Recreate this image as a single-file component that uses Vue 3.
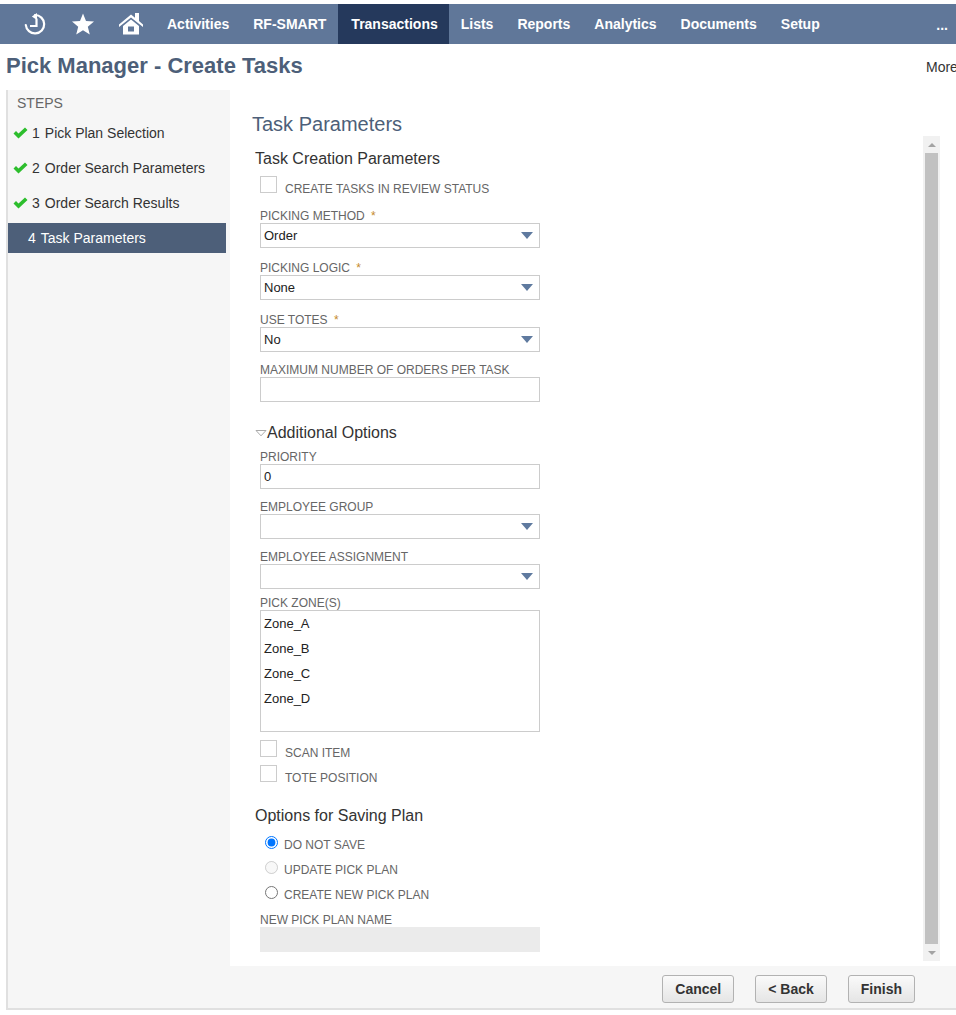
<script setup>
const menu = ['Activities', 'RF-SMART', 'Transactions', 'Lists', 'Reports', 'Analytics', 'Documents', 'Setup']
const steps = [
  { num: 1, label: 'Pick Plan Selection', done: true },
  { num: 2, label: 'Order Search Parameters', done: true },
  { num: 3, label: 'Order Search Results', done: true },
  { num: 4, label: 'Task Parameters', done: false }
]
const zones = ['Zone_A', 'Zone_B', 'Zone_C', 'Zone_D']
</script>

<template>
  <div class="page">
    <nav class="nav">
      <span class="nav-icon">
        <svg width="24" height="24" viewBox="0 0 24 24" fill="none" stroke="#fff" stroke-width="2.2">
          <path d="M12 3A9.200 9.200 0 1 1 2.800 13" stroke-linecap="round" />
          <path d="M8.800 4.500L14 1v7z" fill="#fff" stroke="none" />
          <path d="M13.500 6.500V14H7" />
        </svg>
      </span>
      <span class="nav-icon">
        <svg width="24" height="24" viewBox="0 0 24 24" fill="#fff">
          <path d="M12 1.500l3 7.600 8 .5-6.200 5.100 2 7.900L12 18.200 5.200 22.600l2-7.900L1 9.600l8-.5z" />
        </svg>
      </span>
      <span class="nav-icon">
        <svg width="26" height="24" viewBox="0 0 26 24" fill="#fff">
          <path d="M1 12.500L13 2.500l4 3.300V1h4v8.100l4 3.400V15L13 5.500 1 15z" />
          <path fill-rule="evenodd" d="M13 7.500l8 6.500v8.500H5V14zM10 14.500v5h6v-5z" />
        </svg>
      </span>
      <a
        v-for="item in menu"
        :key="item"
        class="nav-link"
        :class="{ active: item === 'Transactions' }"
      >{{ item }}</a>
      <span class="nav-more">...</span>
    </nav>

    <header class="title-row">
      <h1>Pick Manager - Create Tasks</h1>
      <span class="more">More</span>
    </header>

    <div class="main">
      <aside class="steps">
        <div class="steps-title">STEPS</div>
        <div
          v-for="s in steps"
          :key="s.num"
          class="step"
          :class="{ current: !s.done }"
        >
          <svg v-if="s.done" class="check" width="15" height="12" viewBox="0 0 15 12">
            <path d="M.5 6.500L3 4l2.500 2.500L12 .5 14.500 3l-9 8.500z" fill="#2dbe2d" />
          </svg>
          <span class="num">{{ s.num }}</span>
          <span>{{ s.label }}</span>
        </div>
      </aside>

      <div class="right">
        <div class="content">
          <form class="form" @submit.prevent>
            <h2>Task Parameters</h2>

            <h3>Task Creation Parameters</h3>
            <div class="check-row first">
              <span class="box"></span>
              <span class="lbl">CREATE TASKS IN REVIEW STATUS</span>
            </div>

            <div class="field tight">
              <label class="req">PICKING METHOD <i>*</i></label>
              <div class="ctl">Order<b class="arrow"></b></div>
            </div>
            <div class="field">
              <label class="req">PICKING LOGIC <i>*</i></label>
              <div class="ctl">None<b class="arrow"></b></div>
            </div>
            <div class="field">
              <label class="req">USE TOTES <i>*</i></label>
              <div class="ctl">No<b class="arrow"></b></div>
            </div>
            <div class="field">
              <label>MAXIMUM NUMBER OF ORDERS PER TASK</label>
              <div class="ctl"></div>
            </div>

            <h3 class="additional">
              <svg width="12" height="8" viewBox="0 0 12 8">
                <path d="M1 1.500h10L6 6.800z" fill="#fff" stroke="#aaa" />
              </svg>Additional Options
            </h3>
            <div class="field tight2">
              <label>PRIORITY</label>
              <div class="ctl">0</div>
            </div>
            <div class="field">
              <label>EMPLOYEE GROUP</label>
              <div class="ctl"><b class="arrow"></b></div>
            </div>
            <div class="field">
              <label>EMPLOYEE ASSIGNMENT</label>
              <div class="ctl"><b class="arrow"></b></div>
            </div>
            <div class="field zones-field">
              <label>PICK ZONE(S)</label>
              <div class="zones">
                <div v-for="z in zones" :key="z" class="zone">{{ z }}</div>
              </div>
            </div>
            <div class="check-row scan">
              <span class="box"></span>
              <span class="lbl">SCAN ITEM</span>
            </div>
            <div class="check-row tote">
              <span class="box"></span>
              <span class="lbl">TOTE POSITION</span>
            </div>

            <h3 class="saving">Options for Saving Plan</h3>
            <label class="radio-row">
              <input type="radio" name="save" checked />
              <span>DO NOT SAVE</span>
            </label>
            <label class="radio-row">
              <input type="radio" name="save" disabled />
              <span>UPDATE PICK PLAN</span>
            </label>
            <label class="radio-row">
              <input type="radio" name="save" />
              <span>CREATE NEW PICK PLAN</span>
            </label>
            <div class="field plan-name">
              <label>NEW PICK PLAN NAME</label>
              <div class="ctl disabled"></div>
            </div>
          </form>

          <div class="scrollbar">
            <div class="sb-btn"><span class="up"></span></div>
            <div class="thumb"></div>
            <div class="sb-btn"><span class="down"></span></div>
          </div>
        </div>

        <footer class="footer">
          <button type="button">Cancel</button>
          <button type="button">&lt; Back</button>
          <button type="button">Finish</button>
        </footer>
      </div>
    </div>
  </div>
</template>

<style>
html, body {
  margin: 0;
  background: #fff;
  overflow: hidden;
}
</style>

<style scoped>
.page {
  height: 1015px;
  padding-top: 4px;
  box-sizing: border-box;
  font-family: "Liberation Sans", Arial, sans-serif;
  color: #333;
  overflow: hidden;
}

.nav {
  display: flex;
  align-items: stretch;
  height: 40px;
  padding-left: 11px;
  background: #607799;
  color: #fff;
}
.nav-icon {
  display: flex;
  align-items: center;
  justify-content: center;
  width: 48px;
}
.nav-link {
  display: flex;
  align-items: center;
  padding: 0 12px;
  font-size: 14px;
  font-weight: 700;
}
.nav-link.active {
  background: #25395c;
  padding: 0 11px 0 13px;
}
.nav-more {
  margin-left: auto;
  padding-right: 8px;
  font-size: 14px;
  font-weight: 700;
  line-height: 42px;
}

.title-row {
  display: flex;
  justify-content: space-between;
  height: 46px;
  padding-left: 6px;
  box-sizing: border-box;
  white-space: nowrap;
  overflow: hidden;
}
.title-row h1 {
  margin: 0;
  font-size: 22px;
  font-weight: 700;
  line-height: 43px;
  color: #4d5f79;
}
.more {
  width: 30px;
  overflow: hidden;
  font-size: 14px;
  line-height: 46px;
}

.main {
  display: flex;
  height: 920px;
  margin-left: 6px;
  border-left: 2px solid #e0e0e0;
  border-bottom: 2px solid #e0e0e0;
  box-sizing: border-box;
  background: #f6f6f6;
}

.steps {
  width: 222px;
  flex: none;
  font-size: 14px;
}
.steps-title {
  height: 25px;
  padding-left: 9px;
  line-height: 27px;
  color: #666;
}
.step {
  display: flex;
  align-items: center;
  height: 35px;
  padding-left: 5px;
  white-space: nowrap;
}
.check {
  flex: none;
  margin-right: 4px;
}
.num {
  margin-right: 5px;
}
.step.current {
  height: 30px;
  margin: 3px 4px 0 0;
  padding-left: 20px;
  background: #4d5f79;
  color: #fff;
}

.right {
  flex: 1;
  min-width: 0;
  display: flex;
  flex-direction: column;
}
.content {
  display: flex;
  height: 876px;
  background: #fff;
}
.form {
  width: 693px;
  flex: none;
  box-sizing: border-box;
  padding-left: 22px;
  overflow: hidden;
}
.form h2 {
  margin: 22px 0 0;
  font-size: 20px;
  font-weight: 400;
  line-height: 24px;
  color: #4d5f79;
}
.form h3 {
  margin: 13px 0 0 3px;
  font-size: 16px;
  font-weight: 400;
  line-height: 20px;
  color: #333;
}

.check-row {
  display: flex;
  margin-left: 8px;
  height: 17px;
  font-size: 12px;
  color: #666;
}
.check-row.first {
  margin-top: 7px;
}
.box {
  flex: none;
  width: 15px;
  height: 15px;
  border: 1px solid #ccc;
  background: #fff;
}
.lbl {
  margin-left: 8px;
  padding-top: 6px;
  line-height: 14px;
}

.field {
  margin: 10px 0 0 8px;
  width: 280px;
}
.field.tight {
  margin-top: 13px;
}
.field.tight2 {
  margin-top: 0;
}
.field.zones-field {
  margin-top: 6px;
}
.field label {
  display: block;
  height: 15px;
  font-size: 12px;
  line-height: 16px;
  color: #666;
  white-space: nowrap;
}
.field label.req {
  height: 14px;
  padding-top: 3px;
  line-height: 14px;
}
.field label i {
  margin-left: 3px;
  font-style: normal;
  color: #c58a2b;
}
.ctl {
  position: relative;
  height: 25px;
  box-sizing: border-box;
  padding-left: 3px;
  border: 1px solid #ccc;
  background: #fff;
  font-size: 13px;
  line-height: 23px;
  color: #222;
}
.ctl.disabled {
  border-color: #ebebeb;
  background: #ebebeb;
}
.arrow {
  position: absolute;
  top: 8px;
  right: 6px;
  width: 0;
  height: 0;
  border-left: 6px solid transparent;
  border-right: 6px solid transparent;
  border-top: 7px solid #5f7a9f;
}

.form h3.additional {
  display: flex;
  align-items: center;
  margin-top: 21px;
  height: 20px;
  margin-bottom: 6px;
}
.additional svg {
  flex: none;
}

.zones {
  height: 122px;
  box-sizing: border-box;
  padding: 0 3px;
  border: 1px solid #ccc;
  font-size: 13px;
  color: #222;
}
.zone {
  height: 25px;
  line-height: 26px;
}

.check-row.scan {
  margin-top: 8px;
}
.check-row.tote {
  margin-top: 8px;
}

.form h3.saving {
  margin-top: 24px;
  margin-bottom: 5px;
}
.radio-row {
  display: flex;
  align-items: center;
  height: 25px;
  margin-left: 13px;
  font-size: 12px;
  color: #666;
}
.radio-row input {
  width: 13px;
  height: 13px;
  margin: -3px 6px 0 0;
}
.radio-row span {
  padding-top: 2px;
}
.field.plan-name {
  margin-top: 6px;
}

.scrollbar {
  display: flex;
  flex-direction: column;
  align-items: center;
  width: 17px;
  height: 825px;
  flex: none;
  margin-top: 46px;
  background: #f1f1f1;
}
.sb-btn {
  display: flex;
  align-items: center;
  justify-content: center;
  height: 17px;
  flex: none;
}
.thumb {
  flex: 1;
  width: 13px;
  background: #c1c1c1;
}
.up {
  border-left: 4px solid transparent;
  border-right: 4px solid transparent;
  border-bottom: 4px solid #a3a3a3;
}
.down {
  border-left: 4px solid transparent;
  border-right: 4px solid transparent;
  border-top: 4px solid #a3a3a3;
}

.footer {
  display: flex;
  justify-content: flex-end;
  gap: 21px;
  padding: 9px 41px 0 0;
}
.footer button {
  height: 28px;
  padding: 0 12px;
  border: 1px solid #b2b2b2;
  border-radius: 3px;
  background: linear-gradient(#fafafa, #e5e5e5);
  font-family: "Liberation Sans", Arial, sans-serif;
  font-size: 14px;
  font-weight: 700;
  color: #333;
}
</style>
